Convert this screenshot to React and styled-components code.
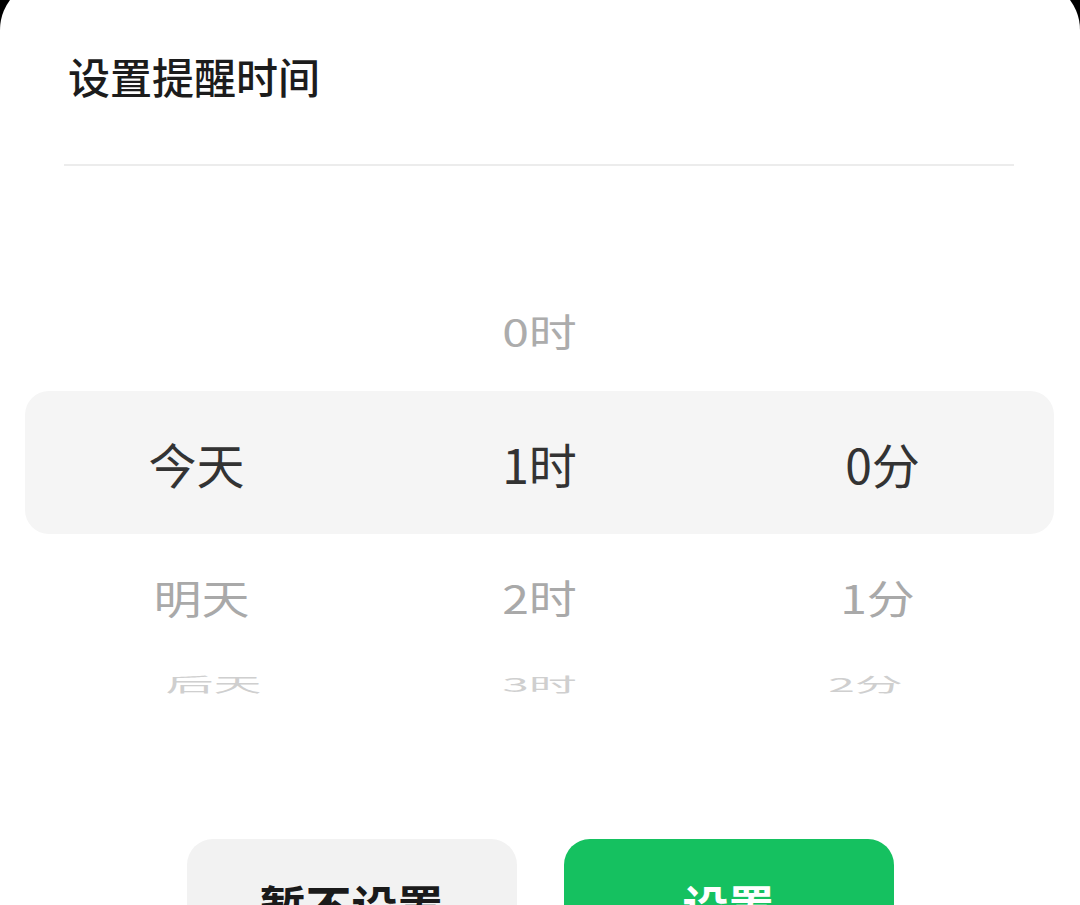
import React from 'react'
import styled, { createGlobalStyle } from 'styled-components'

const GlobalStyle = createGlobalStyle`
  html, body {
    margin: 0;
    padding: 0;
    height: 100%;
    overflow: hidden;
    background: #000;
  }
  body {
    font-family: "Noto Sans CJK SC", "Noto Sans", sans-serif;
  }
`

const Sheet = styled.div`
  margin-top: -20px;
  background: #fff;
  border-radius: 50px 50px 0 0;
  display: flex;
  flex-direction: column;
`

const Header = styled.div`
  padding: 71px 66px 63px 68px;
`

const Title = styled.h1`
  margin: 0;
  font-size: 42px;
  line-height: 50px;
  font-weight: 500;
  color: #1c1c1c;
`

const Divider = styled.div`
  flex-shrink: 0;
  height: 2px;
  margin: 0 66px 0 64px;
  background: #ececec;
`

const Picker = styled.div`
  margin-top: 103px;
  padding: 0 26px 0 25px;
  display: flex;
  flex-direction: column;
`

const Row = styled.div`
  height: ${p => p.$height}px;
  display: grid;
  grid-template-columns: repeat(3, 1fr);
  align-items: center;
  background: ${p => (p.$selected ? '#f5f5f5' : 'transparent')};
  border-radius: 24px;
`

const Cell = styled.div`
  text-align: center;
  font-size: 48px;
  line-height: 1;
  color: ${p => p.$color};
  transform: translateX(${p => p.$shift}px) scaleY(${p => p.$scale});
`

const Actions = styled.div`
  margin-top: 131px;
  display: flex;
  justify-content: center;
  gap: 47px;
`

const Button = styled.button`
  width: 330px;
  height: 130px;
  border: none;
  border-radius: 26px;
  font-family: inherit;
  font-size: 46px;
  font-weight: 700;
  background: ${p => (p.$primary ? '#15c160' : '#f2f2f2')};
  color: ${p => (p.$primary ? '#fff' : '#1a1a1a')};
`

const rows = [
  { cells: ['', '0时', ''], height: 122, scale: 0.8, color: '#acacac', shift: 0 },
  { cells: ['今天', '1时', '0分'], height: 143, scale: 1, color: '#333', shift: 0, selected: true },
  { cells: ['明天', '2时', '1分'], height: 126, scale: 0.82, color: '#a9a9a9', shift: 5 },
  { cells: ['后天', '3时', '2分'], height: 48, scale: 0.4, color: '#cfcfcf', shift: 17 },
]

export default function App() {
  return (
    <>
      <GlobalStyle />
      <Sheet>
        <Header>
          <Title>设置提醒时间</Title>
        </Header>
        <Divider />
        <Picker>
          {rows.map((r, i) => (
            <Row key={i} $height={r.height} $selected={r.selected}>
              {r.cells.map((c, j) => (
                <Cell
                  key={j}
                  $color={r.color}
                  $scale={r.scale}
                  $shift={(1 - j) * r.shift}
                >
                  {c}
                </Cell>
              ))}
            </Row>
          ))}
        </Picker>
        <Actions>
          <Button>暂不设置</Button>
          <Button $primary>设置</Button>
        </Actions>
      </Sheet>
    </>
  )
}
